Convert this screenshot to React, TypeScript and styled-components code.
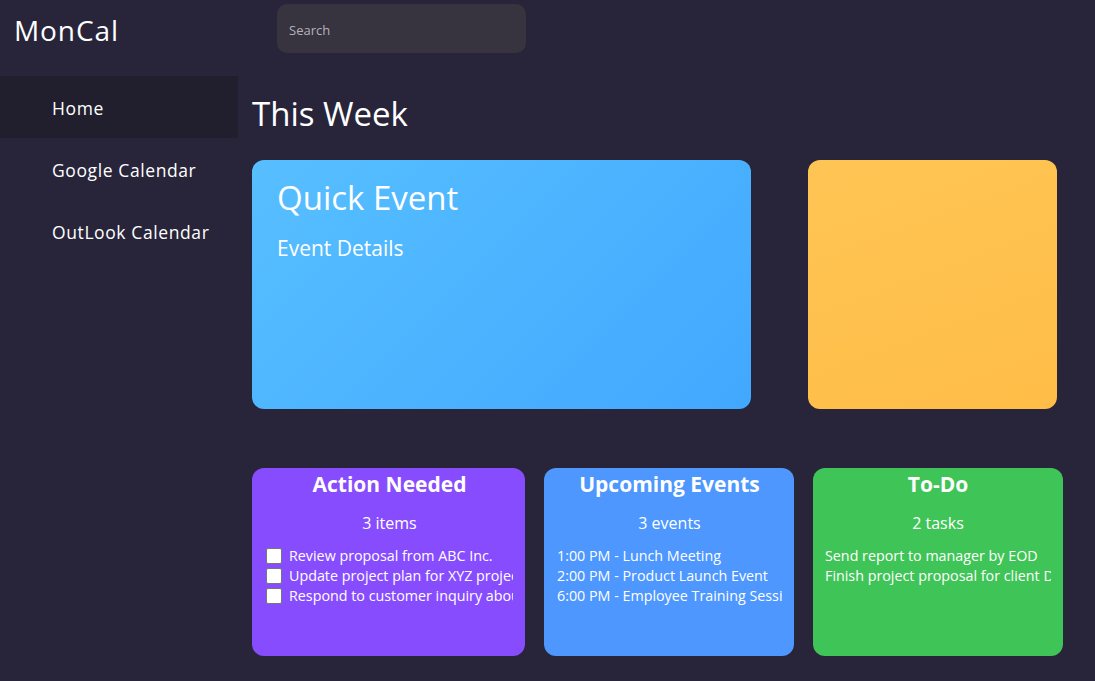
import React from "react";
import styled, { createGlobalStyle } from "styled-components";

const Global = createGlobalStyle`
  html, body { margin: 0; padding: 0; background: #28253a; }
  body { font-family: "Open Sans", "Noto Sans", sans-serif; color: #fff; }
  * { box-sizing: border-box; }
`;

const Page = styled.div`
  width: 1095px;
  height: 681px;
  background: #28253a;
  overflow: hidden;
  display: flex;
  flex-direction: column;
`;

const Header = styled.header`
  display: flex;
  align-items: flex-start;
  height: 58px;
  padding-top: 4px;
`;

const Logo = styled.div`
  width: 277px;
  padding-left: 14px;
  font-family: "Open Sans", sans-serif;
  font-size: 28px;
  line-height: 52px;
  font-weight: 400;
  letter-spacing: 0.9px;
`;

const Search = styled.input`
  width: 249px;
  height: 49px;
  border: none;
  border-radius: 10px;
  background: #37343f;
  color: #ddd;
  padding: 2px 12px 0;
  font-family: "Open Sans", sans-serif;
  font-size: 13px;
  outline: none;
  &::placeholder { color: #b4b2ba; }
`;

const Body = styled.div`
  display: flex;
  margin-top: 18px;
`;

const Sidebar = styled.nav`
  width: 238px;
  display: flex;
  flex-direction: column;
`;

const NavItem = styled.div<{ $active?: boolean }>`
  height: 62px;
  display: flex;
  align-items: center;
  padding-left: 52px;
  padding-top: 1px;
  font-family: "Open Sans", sans-serif;
  font-size: 17.5px;
  letter-spacing: 0.6px;
  background: ${(p) => (p.$active ? "#211f2e" : "transparent")};
`;

const Main = styled.main`
  flex: 1;
  padding-left: 14px;
`;

const Heading = styled.h1`
  margin: 16px 0 0;
  font-weight: 400;
  font-size: 33px;
  line-height: 44px;
`;

const TopRow = styled.div`
  display: flex;
  gap: 57px;
  margin-top: 24px;
`;

const QuickCard = styled.div`
  width: 499px;
  height: 249px;
  border-radius: 12px;
  background: linear-gradient(135deg, #57bfff 0%, #41a8ff 100%);
  padding: 18px 25px;
`;

const QuickTitle = styled.div`
  font-size: 33px;
  line-height: 40px;
`;

const QuickSub = styled.div`
  margin-top: 16px;
  font-size: 21px;
`;

const YellowCard = styled.div`
  width: 249px;
  height: 249px;
  border-radius: 12px;
  background: linear-gradient(160deg, #ffc554 0%, #ffbd47 100%);
`;

const BottomRow = styled.div`
  display: flex;
  gap: 19px;
  margin-top: 59px;
`;

const Card = styled.div<{ $bg: string; $w: number; $pl: number }>`
  width: ${(p) => p.$w}px;
  height: 188px;
  border-radius: 12px;
  background: ${(p) => p.$bg};
  padding: 0 12px 0 ${(p) => p.$pl}px;
  display: flex;
  flex-direction: column;
`;

const CardTitle = styled.div`
  text-align: center;
  font-weight: 700;
  font-size: 21px;
  line-height: 32px;
`;

const Count = styled.div`
  text-align: center;
  font-size: 16px;
  margin-top: 11px;
  line-height: 24px;
`;

const List = styled.div`
  margin-top: 11px;
  overflow: hidden;
  white-space: nowrap;
  font-size: 14.3px;
  line-height: 20px;
`;

const CheckRow = styled.label`
  display: flex;
  align-items: center;
  gap: 7px;
`;

const Box = styled.span`
  width: 16px;
  height: 16px;
  flex: none;
  background: #fff;
  border: 1px solid #777;
  border-radius: 2px;
`;

export default function App() {
  return (
    <Page>
      <Global />
      <Header>
        <Logo>MonCal</Logo>
        <Search placeholder="Search" />
      </Header>
      <Body>
        <Sidebar>
          <NavItem $active>Home</NavItem>
          <NavItem>Google Calendar</NavItem>
          <NavItem>OutLook Calendar</NavItem>
        </Sidebar>
        <Main>
          <Heading>This Week</Heading>
          <TopRow>
            <QuickCard>
              <QuickTitle>Quick Event</QuickTitle>
              <QuickSub>Event Details</QuickSub>
            </QuickCard>
            <YellowCard />
          </TopRow>
          <BottomRow>
            <Card $bg="#884cff" $w={273} $pl={14}>
              <CardTitle>Action Needed</CardTitle>
              <Count>3 items</Count>
              <List>
                <CheckRow><Box />Review proposal from ABC Inc.</CheckRow>
                <CheckRow><Box />Update project plan for XYZ project</CheckRow>
                <CheckRow><Box />Respond to customer inquiry about pricing</CheckRow>
              </List>
            </Card>
            <Card $bg="#4d97ff" $w={250} $pl={13}>
              <CardTitle>Upcoming Events</CardTitle>
              <Count>3 events</Count>
              <List>
                <div>1:00 PM - Lunch Meeting</div>
                <div>2:00 PM - Product Launch Event</div>
                <div>6:00 PM - Employee Training Session</div>
              </List>
            </Card>
            <Card $bg="#3fc457" $w={250} $pl={12}>
              <CardTitle>To-Do</CardTitle>
              <Count>2 tasks</Count>
              <List>
                <div>Send report to manager by EOD</div>
                <div>Finish project proposal for client D</div>
              </List>
            </Card>
          </BottomRow>
        </Main>
      </Body>
    </Page>
  );
}
